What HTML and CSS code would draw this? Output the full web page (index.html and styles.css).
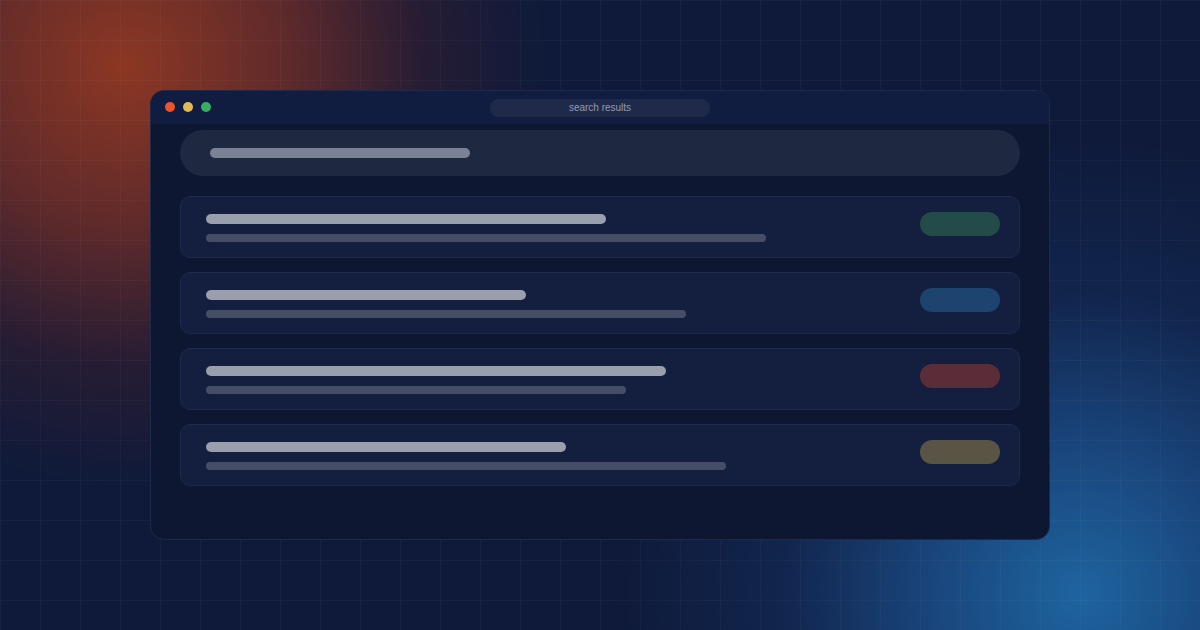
FILE: index.html
```html
<!DOCTYPE html>
<html>
<head>
<meta charset="utf-8">
<link rel="stylesheet" href="styles.css">
</head>
<body>
<div class="page">
  <div class="window">
    <div class="titlebar">
      <div class="dots">
        <span class="dot red"></span>
        <span class="dot yellow"></span>
        <span class="dot green"></span>
      </div>
      <div class="url">search results</div>
    </div>
    <div class="content">
      <div class="search"><span class="search-bar"></span></div>
      <div class="results">
        <div class="card">
          <div class="lines"><span class="title" style="width:400px"></span><span class="sub" style="width:560px"></span></div>
          <span class="badge b-green"></span>
        </div>
        <div class="card">
          <div class="lines"><span class="title" style="width:320px"></span><span class="sub" style="width:480px"></span></div>
          <span class="badge b-blue"></span>
        </div>
        <div class="card">
          <div class="lines"><span class="title" style="width:460px"></span><span class="sub" style="width:420px"></span></div>
          <span class="badge b-red"></span>
        </div>
        <div class="card">
          <div class="lines"><span class="title" style="width:360px"></span><span class="sub" style="width:520px"></span></div>
          <span class="badge b-olive"></span>
        </div>
      </div>
    </div>
  </div>
</div>
</body>
</html>
```

FILE: styles.css
```css
* { box-sizing: border-box; }
html, body { margin: 0; padding: 0; }
body {
  width: 1200px;
  height: 630px;
  overflow: hidden;
  font-family: "Liberation Sans", Arial, sans-serif;
  background-color: #0f1a3a;
}
.page {
  width: 1200px;
  height: 630px;
  padding-top: 90px;
  display: flex;
  justify-content: center;
  align-items: flex-start;
  background-image:
    linear-gradient(to right, rgba(255,255,255,0.028) 1px, transparent 1px),
    linear-gradient(to bottom, rgba(255,255,255,0.028) 1px, transparent 1px),
    radial-gradient(circle at 125px 65px, rgba(140,55,35,1) 0px, rgba(110,45,40,0.85) 160px, rgba(60,30,45,0.5) 300px, rgba(15,26,58,0) 420px),
    radial-gradient(circle at 1080px 595px, rgba(30,100,160,1) 0px, rgba(28,80,140,0.8) 150px, rgba(20,50,100,0.45) 300px, rgba(15,26,58,0) 460px);
  background-size: 40px 40px, 40px 40px, 100% 100%, 100% 100%;
  background-position: 0 0, 0 0, 0 0, 0 0;
}
.window {
  width: 900px;
  height: 450px;
  border-radius: 14px;
  background: #0e1731;
  border: 1px solid #1f2a4a;
  overflow: hidden;
  display: flex;
  flex-direction: column;
}
.titlebar {
  height: 33px;
  flex: none;
  background: #111d40;
  position: relative;
  display: flex;
  align-items: center;
  justify-content: center;
}
.dots {
  position: absolute;
  left: 14px;
  top: 11px;
  display: flex;
  gap: 8px;
}
.dot {
  width: 10px;
  height: 10px;
  border-radius: 50%;
  display: block;
}
.red { background: #f0522c; }
.yellow { background: #e2b953; }
.green { background: #3aad64; }
.url {
  width: 220px;
  height: 18px;
  border-radius: 9px;
  background: #1f2a4b;
  color: #939bb2;
  font-size: 10px;
  line-height: 18px;
  text-align: center;
}
.content {
  padding: 6px 29px 0;
  display: flex;
  flex-direction: column;
  gap: 20px;
}
.search {
  height: 46px;
  border-radius: 23px;
  background: #1f2841;
  display: flex;
  align-items: center;
  padding-left: 30px;
}
.search-bar {
  display: block;
  width: 260px;
  height: 10px;
  border-radius: 5px;
  background: #7b8295;
}
.results {
  display: flex;
  flex-direction: column;
  gap: 14px;
}
.card {
  height: 62px;
  border-radius: 10px;
  background: #141f3f;
  border: 1px solid #1e2a4b;
  display: flex;
  justify-content: space-between;
  align-items: flex-start;
  padding: 17px 19px 0 25px;
}
.lines {
  display: flex;
  flex-direction: column;
  gap: 10px;
}
.title {
  display: block;
  height: 10px;
  border-radius: 5px;
  background: #9a9fad;
}
.sub {
  display: block;
  height: 8px;
  border-radius: 4px;
  background: #454e66;
}
.badge {
  display: block;
  width: 80px;
  height: 24px;
  border-radius: 12px;
  margin-top: -2px;
}
.b-green { background: #234b48; }
.b-blue { background: #1d436f; }
.b-red { background: #5a2d38; }
.b-olive { background: #5a5444; }
```
